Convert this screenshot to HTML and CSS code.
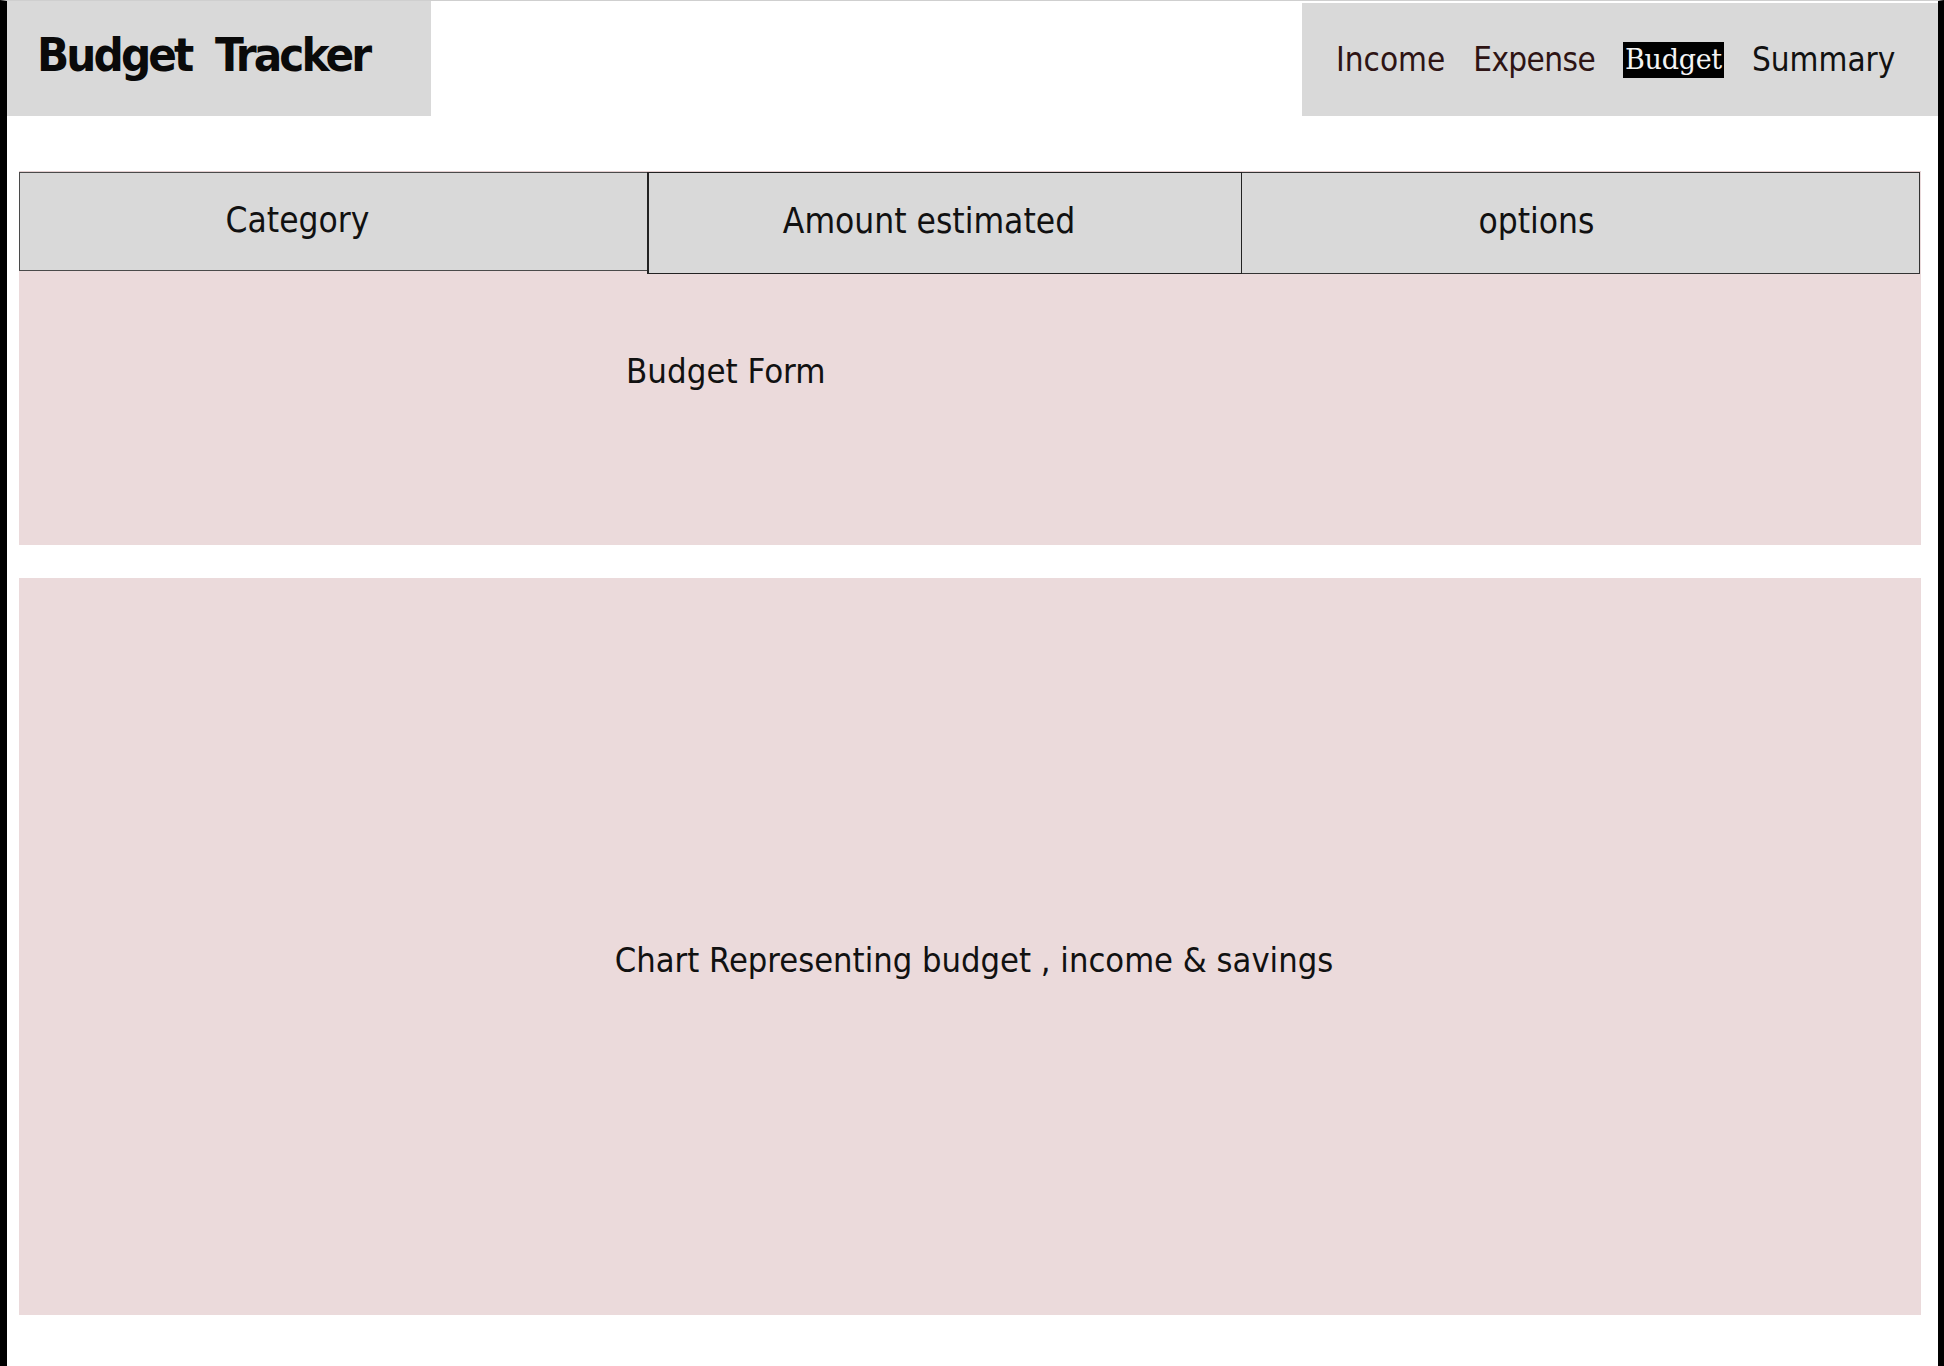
FILE: index.html
```html
<!DOCTYPE html>
<html lang="en">
<head>
<meta charset="utf-8">
<title>Budget Tracker</title>
<link rel="stylesheet" href="styles.css">
</head>
<body>
<div class="page">
  <header class="topbar">
    <div class="logo">Budget&nbsp; Tracker</div>
    <nav class="nav">
      <a class="nav-link nav-brown" href="#">Income</a>
      <a class="nav-link nav-brown nav-tight" href="#">Expense</a>
      <a class="nav-link nav-active" href="#">Budget</a>
      <a class="nav-link" href="#">Summary</a>
    </nav>
  </header>
  <main class="content">
    <section class="form-panel">
      <div class="table-head">
        <div class="th th-category">Category</div>
        <div class="th th-amount">Amount estimated</div>
        <div class="th th-options">options</div>
      </div>
      <div class="form-label">Budget Form</div>
    </section>
    <section class="chart-panel">
      <div class="chart-label">Chart Representing budget , income &amp; savings</div>
    </section>
  </main>
</div>
</body>
</html>
```

FILE: styles.css
```css
html, body {
  margin: 0;
  padding: 0;
  background: #ffffff;
}

.page {
  box-sizing: border-box;
  width: 1944px;
  height: 1366px;
  border-left: 7px solid #000;
  border-right: 6px solid #000;
  border-top: 1px solid #cfcfcf;
  background: #fff;
  font-family: "DejaVu Sans", "Liberation Sans", sans-serif;
  font-stretch: condensed;
  color: #111;
  overflow: hidden;
}

.topbar {
  display: flex;
  justify-content: space-between;
  align-items: flex-start;
}

.logo {
  box-sizing: border-box;
  width: 424px;
  height: 115px;
  background: #d9d9d9;
  padding-left: 30px;
  padding-top: 30px;
  font-family: "DejaVu Sans", sans-serif;
  font-stretch: condensed;
  font-weight: bold;
  font-size: 47px;
  line-height: 1;
  letter-spacing: -2.9px;
  color: #0a0a0a;
  white-space: nowrap;
}

.nav {
  box-sizing: border-box;
  width: 636px;
  height: 113px;
  margin-top: 2px;
  background: #d9d9d9;
  padding-left: 34px;
  display: flex;
  align-items: center;
  gap: 28px;
}

.nav-link {
  font-size: 33px;
  text-decoration: none;
  color: #111;
  line-height: 1;
}

.nav-brown {
  color: #2e1414;
}

.nav-tight {
  letter-spacing: -0.6px;
}

.nav-active {
  font-family: "DejaVu Serif", serif;
  font-stretch: normal;
  font-size: 27px;
  letter-spacing: -0.3px;
  background: #000;
  color: #f4f4f4;
  line-height: 36px;
  padding: 0 2px;
}

.content {
  margin: 55px 17px 0 12px;
  display: flex;
  flex-direction: column;
  gap: 33px;
}

.form-panel {
  background: #ebdadb;
  height: 374px;
}

.table-head {
  display: flex;
  align-items: flex-start;
  border-top: 1px solid #e3cfd0;
}

.th {
  box-sizing: border-box;
  background: #d9d9d9;
  font-size: 35px;
  color: #111;
  display: flex;
  align-items: center;
  justify-content: center;
  padding-bottom: 4px;
}

.th-category {
  width: 628px;
  height: 99px;
  border: 1px solid #4a4a4a;
  border-right: none;
  padding-right: 72px;
}

.th-amount {
  width: 595px;
  height: 102px;
  border: 1px solid #222;
  border-left-width: 2px;
  padding-right: 32px;
}

.th-options {
  width: 678px;
  height: 102px;
  border: 1px solid #333;
  border-left: none;
  padding-right: 88px;
}

.form-label {
  padding: 77px 0 0 607px;
  font-size: 34.5px;
  color: #111;
}

.chart-panel {
  background: #ebdadb;
  height: 737px;
  box-sizing: border-box;
  padding-top: 362px;
  padding-left: 8px;
  text-align: center;
}

.chart-label {
  font-size: 34.2px;
  color: #111;
}
```
